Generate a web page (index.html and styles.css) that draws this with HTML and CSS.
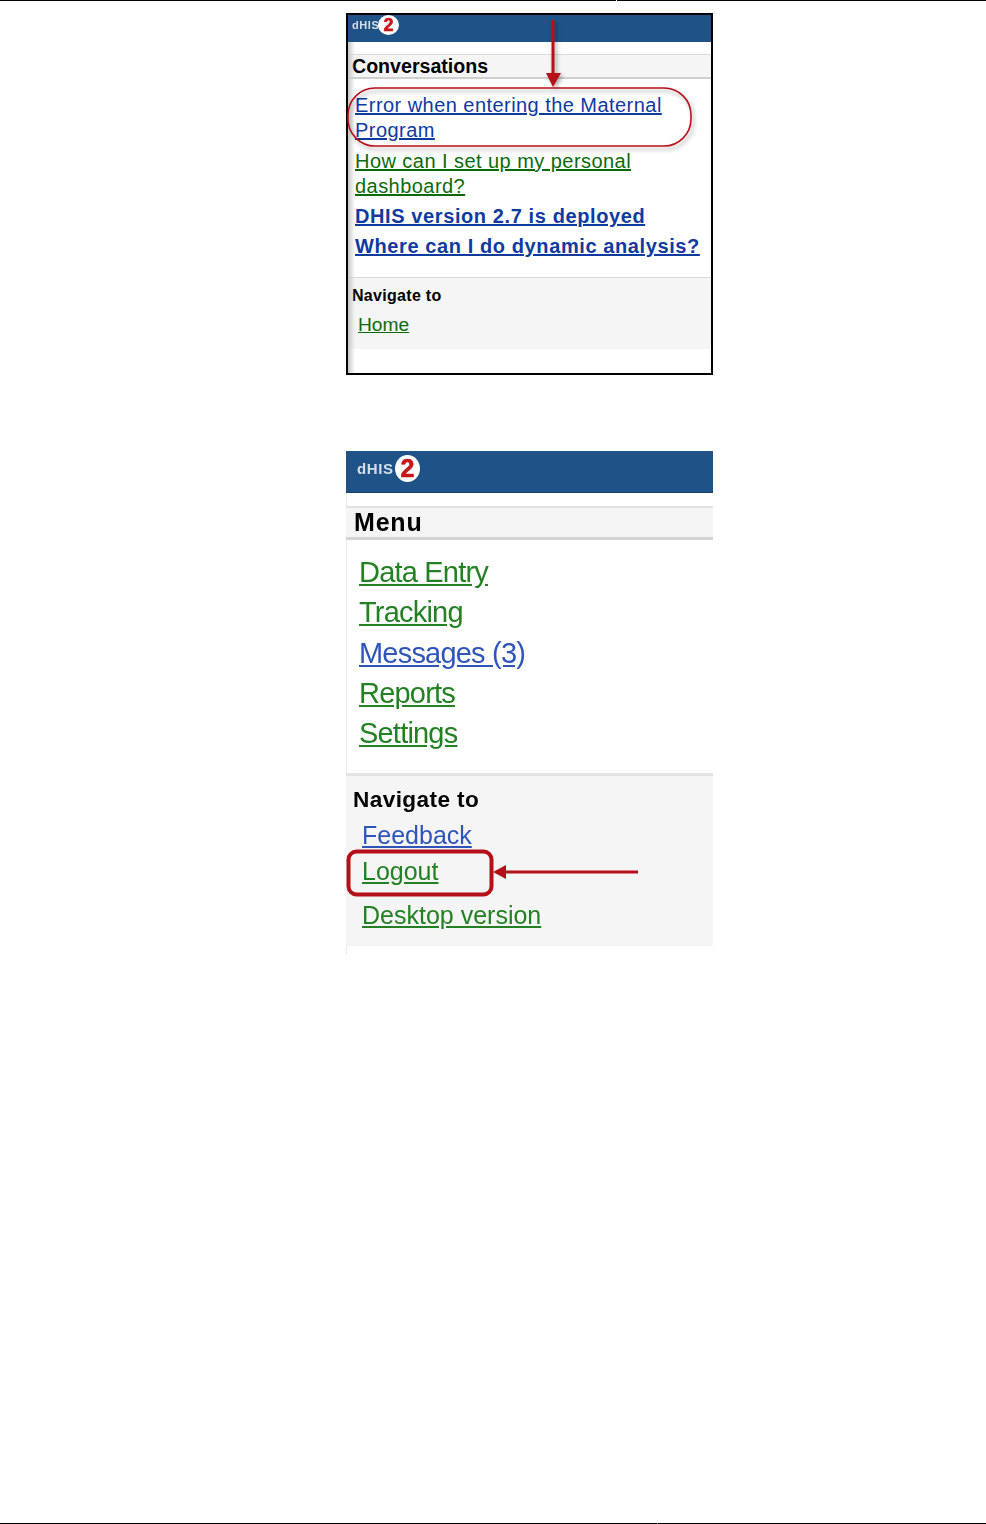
FILE: index.html
```html
<!DOCTYPE html>
<html lang="en">
<head>
    <meta charset="UTF-8">
    <meta name="viewport" content="width=device-width, initial-scale=1.0">
    <title>DHIS2 mobile screenshots</title>
    <link rel="stylesheet" href="styles.css">
</head>
<body>
    <div class="rule rule-top"><span></span><span></span></div>

    <main class="page">
        <!-- Conversations screen -->
        <div class="fig fig-one">
            <div class="screen">
                <div class="bar">
                    <div class="logo"><span class="logo-text">dHIS</span><span class="logo-two">2</span></div>
                </div>
                <h2 class="title">Conversations</h2>
                <ul class="links">
                    <li><a class="blue" href="#">Error when entering the Maternal Program</a></li>
                    <li><a class="green" href="#">How can I set up my personal dashboard?</a></li>
                    <li><a class="blue unread" href="#">DHIS version 2.7 is deployed</a></li>
                    <li><a class="blue unread" href="#">Where can I do dynamic analysis?</a></li>
                </ul>
                <div class="nav">
                    <h3>Navigate to</h3>
                    <a class="green" href="#">Home</a>
                </div>
            </div>
            <svg class="marks" width="367" height="362" viewBox="0 0 367 362">
                <rect class="oval" x="2" y="75" width="343" height="58" rx="27"/>
                <g class="arrow">
                    <path class="line" d="M207 7V62"/>
                    <path class="head" d="M200 60H215L207 74Z"/>
                </g>
            </svg>
        </div>

        <!-- Menu screen -->
        <div class="fig fig-two">
            <div class="screen">
                <div class="bar">
                    <div class="logo"><span class="logo-text">dHIS</span><span class="logo-two">2</span></div>
                </div>
                <h2 class="title">Menu</h2>
                <ul class="links">
                    <li><a class="green" href="#">Data Entry</a></li>
                    <li><a class="green" href="#">Tracking</a></li>
                    <li><a class="blue" href="#">Messages (3)</a></li>
                    <li><a class="green" href="#">Reports</a></li>
                    <li><a class="green" href="#">Settings</a></li>
                </ul>
                <div class="nav">
                    <h3>Navigate to</h3>
                    <a class="blue" href="#">Feedback</a>
                    <a class="green" href="#">Logout</a>
                    <a class="green" href="#">Desktop version</a>
                </div>
            </div>
            <svg class="marks" width="367" height="504" viewBox="0 0 367 504">
                <rect class="box" x="2.5" y="400.5" width="143" height="43" rx="8"/>
                <path class="line" d="M292 421H158"/>
                <path class="head" d="M147 421L160 414V428Z"/>
            </svg>
        </div>
    </main>

    <div class="rule rule-bottom"><span></span><span></span></div>
</body>
</html>
```

FILE: styles.css
```css
html, body {
    margin: 0;
    height: 100%;
}
body {
    display: flex;
    flex-direction: column;
    height: 1524px;
    overflow: hidden;
    background: #fff;
    font-family: "Liberation Sans", Arial, sans-serif;
    color: #000;
}
.rule {
    display: flex;
    gap: 1px;
    height: 1px;
    flex: none;
}
.rule span {
    background: #000;
}
.rule-top span:first-child { width: 616px; }
.rule-top span:last-child { flex: 1; }
.rule-bottom { background: #999; }
.rule-bottom span:first-child { width: 657px; }
.rule-bottom span:last-child { flex: 1; }

.page {
    flex: 1;
    display: flex;
    flex-direction: column;
    gap: 76px;
    padding: 12px 0 0 346px;
}
.fig {
    position: relative;
    width: 367px;
}
.marks {
    position: absolute;
    left: 0;
    top: 0;
    overflow: visible;
}
.oval {
    fill: none;
    stroke: #b8101c;
    stroke-width: 1.6;
    filter: drop-shadow(2px 3px 2px rgba(0, 0, 0, 0.35));
}
.arrow {
    filter: drop-shadow(2px 2px 2px rgba(0, 0, 0, 0.35));
}
.line {
    fill: none;
    stroke: #b5101a;
    stroke-width: 3;
}
.head {
    fill: #b5101a;
}
.box {
    fill: none;
    stroke: #b5101a;
    stroke-width: 4;
}

a {
    text-decoration: underline;
}
.blue { color: #0f3a9e; }
.green { color: #0b6b0b; }
.unread { font-weight: bold; }

.screen {
    position: relative;
    box-sizing: border-box;
}
.links {
    list-style: none;
    margin: 0;
    padding: 0;
}
.title {
    margin: 0;
    background: #f5f5f5;
}
.nav {
    background: #f5f5f5;
}
.nav h3 {
    margin: 0;
}
.nav a {
    display: block;
}

/* logo */
.bar {
    background: #1f5388;
}
.logo {
    display: flex;
    align-items: center;
}
.logo-text {
    color: #d5dfea;
    font-weight: bold;
    filter: blur(0.7px);
}
.logo-two {
    display: flex;
    align-items: center;
    justify-content: center;
    border-radius: 50%;
    background: #fff;
    color: #c8161d;
    font-weight: bold;
    -webkit-text-stroke: 0.6px #c8161d;
    filter: blur(0.4px);
}

/* first figure */
.fig-one .screen {
    height: 362px;
    border: 2px solid #000;
}
.fig-one .screen::after {
    content: "";
    position: absolute;
    left: 0;
    top: 27px;
    bottom: 0;
    width: 7px;
    background: linear-gradient(to right, #c8c8c8, rgba(255, 255, 255, 0));
}
.fig-one .bar {
    height: 27px;
    padding-left: 4px;
}
.fig-one .logo-text {
    width: 26px;
    font-size: 11px;
    letter-spacing: 0.6px;
}
.fig-one .logo-two {
    width: 21px;
    height: 20px;
    font-size: 18px;
}
.fig-one .title {
    margin-top: 12px;
    height: 25px;
    box-sizing: border-box;
    padding-left: 4px;
    border-top: 1px solid #dcdcdc;
    border-bottom: 2px solid #d0d0d0;
    font-size: 19.6px;
    line-height: 22px;
}
.fig-one .links {
    padding: 14px 8px 13px 7px;
}
.fig-one .links li {
    font-size: 20px;
    line-height: 25px;
    letter-spacing: 0.45px;
    margin-bottom: 5px;
}
.fig-one .links li:first-child {
    margin-bottom: 6px;
}
.fig-one .links .unread {
    letter-spacing: 0.6px;
}
.fig-one .nav {
    height: 72px;
    box-sizing: border-box;
    border-top: 1px solid #d8d8d8;
    padding: 8px 0 0 4px;
}
.fig-one .nav h3 {
    font-size: 16px;
    line-height: 19px;
    letter-spacing: 0.3px;
}
.fig-one .nav a {
    margin: 8px 0 0 6px;
    width: max-content;
    font-size: 19.2px;
    line-height: 24px;
}

/* second figure, a larger and softer capture */
.fig-two .screen {
    height: 504px;
    box-shadow: inset 1px 0 0 #ececec;
}
.fig-two .bar {
    height: 41px;
    padding-left: 11px;
    border-bottom: 1px solid #17406b;
}
.fig-two .logo {
    height: 34px;
}
.fig-two .logo-text {
    width: 38px;
    font-size: 15px;
    letter-spacing: 0.6px;
}
.fig-two .logo-two {
    width: 25px;
    height: 27px;
    font-size: 25px;
}
.fig-two .title {
    margin-top: 13px;
    height: 34px;
    box-sizing: border-box;
    padding-left: 8px;
    border-top: 2px solid #e2e2e2;
    border-bottom: 3px solid #d4d4d4;
    font-size: 25px;
    line-height: 29px;
    letter-spacing: 0.8px;
    filter: blur(0.4px);
}
.fig-two .links {
    height: 233px;
    box-sizing: border-box;
    padding: 12px 0 0 13px;
}
.fig-two .links li {
    font-size: 29px;
    line-height: 40.3px;
    letter-spacing: -0.8px;
    filter: blur(0.4px);
}
.fig-two .blue { color: #2f55b8; }
.fig-two .green { color: #238023; }
.fig-two .nav {
    height: 173px;
    box-sizing: border-box;
    border-top: 3px solid #e4e4e4;
    padding: 10px 0 0 7px;
}
.fig-two .nav h3 {
    margin-bottom: 4px;
    font-size: 22.6px;
    line-height: 27px;
    letter-spacing: 0.4px;
    filter: blur(0.4px);
}
.fig-two .nav a {
    width: max-content;
    margin-left: 9px;
    font-size: 25px;
    line-height: 36px;
    filter: blur(0.4px);
}
.fig-two .nav a:last-child {
    margin-top: 8px;
}
```
